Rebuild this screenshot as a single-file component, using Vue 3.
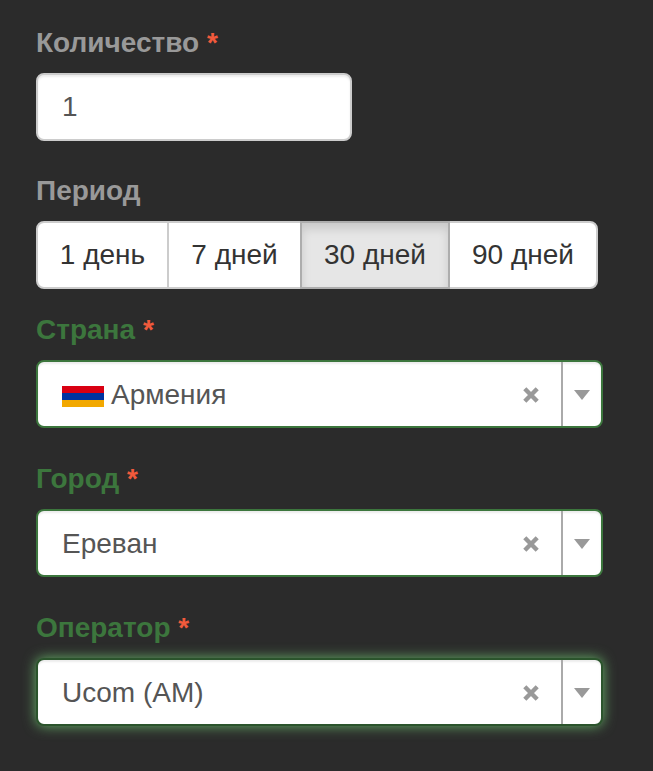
<script setup>
const periods = [
  { text: '1 день', w: 133 },
  { text: '7 дней', w: 135 },
  { text: '30 дней', w: 150 },
  { text: '90 дней', w: 150 }
]
const selects = [
  { label: 'Страна', value: 'Армения', flag: true, cls: '' },
  { label: 'Город', value: 'Ереван', flag: false, cls: '' },
  { label: 'Оператор', value: 'Ucom (AM)', flag: false, cls: 'glow' }
]
</script>

<template>
  <div class="page">
    <div class="group g-qty">
      <label class="label">Количество <span class="req">*</span></label>
      <div class="input">1</div>
    </div>

    <div class="group g-period">
      <label class="label">Период</label>
      <div class="btns">
        <div
          v-for="(p, i) in periods"
          :key="p.text"
          class="btn"
          :class="{ active: i === 2 }"
          :style="{ width: p.w + 'px' }"
        >{{ p.text }}</div>
      </div>
    </div>

    <div v-for="s in selects" :key="s.label" class="group g-sel">
      <label class="label green">{{ s.label }} <span class="req">*</span></label>
      <div class="select" :class="s.cls">
        <div class="value">
          <svg v-if="s.flag" class="flag" viewBox="0 0 42 21" width="42" height="21">
            <rect width="42" height="7" y="0" fill="#d90012" />
            <rect width="42" height="7" y="7" fill="#0033a0" />
            <rect width="42" height="7" y="14" fill="#f2a800" />
          </svg>
          <span>{{ s.value }}</span>
        </div>
        <svg class="clear" viewBox="0 0 16 16" width="16" height="16">
          <path d="M1.8 1.8 L14.2 14.2 M14.2 1.8 L1.8 14.2" stroke="#999" stroke-width="4.4" fill="none" />
        </svg>
        <div class="arrow"><i class="tri"></i></div>
      </div>
    </div>
  </div>
</template>

<style scoped>
.page {
  width: 653px;
  height: 771px;
  box-sizing: border-box;
  background: #2b2b2b;
  padding: 25px 0 0 36px;
  overflow: hidden;
  font-family: "Liberation Sans", Arial, sans-serif;
}
.label {
  display: block;
  height: 36px;
  line-height: 36px;
  margin-bottom: 12px;
  font-size: 28px;
  font-weight: 700;
  color: #999;
}
.label.green { color: #3c763d; }
.req { color: #f15a3c; }
.g-qty { margin-bottom: 32px; }
.g-period { margin-bottom: 23px; }
.g-sel { margin-bottom: 33px; }
.input {
  width: 316px;
  height: 68px;
  box-sizing: border-box;
  background: #fff;
  border: 2px solid #ccc;
  border-radius: 8px;
  box-shadow: inset 0 2px 2px rgba(0, 0, 0, 0.075);
  padding-left: 24px;
  line-height: 64px;
  font-size: 28px;
  color: #555;
}
.btns {
  display: flex;
  width: 562px;
  height: 68px;
}
.btn {
  box-sizing: border-box;
  flex: none;
  height: 68px;
  background: #fff;
  border: 2px solid #ccc;
  margin-left: -2px;
  line-height: 64px;
  text-align: center;
  font-size: 28px;
  color: #333;
}
.btn:first-child {
  margin-left: 0;
  border-radius: 8px 0 0 8px;
}
.btn:last-child { border-radius: 0 8px 8px 0; }
.btn.active {
  background: #e6e6e6;
  border-color: #adadad;
  box-shadow: inset 0 6px 10px rgba(0, 0, 0, 0.125);
  position: relative;
  z-index: 1;
}
.select {
  display: flex;
  align-items: center;
  width: 567px;
  height: 68px;
  box-sizing: border-box;
  background: #fff;
  border: 2px solid #3c763d;
  border-radius: 8px;
  box-shadow: inset 0 2px 2px rgba(0, 0, 0, 0.075);
}
.select.glow {
  border-color: #2b542c;
  box-shadow: inset 0 2px 2px rgba(0, 0, 0, 0.075), 0 0 13px #67b168;
}
.value {
  flex: 1;
  display: flex;
  align-items: center;
  padding: 2px 0 0 24px;
  font-size: 28px;
  color: #555;
}
.flag { margin: 2px 7px 0 0; }
.clear { margin: 2px 22px 0 0; }
.arrow {
  width: 40px;
  height: 64px;
  box-sizing: border-box;
  border-left: 2px solid #aaa;
  padding-top: 2px;
  display: flex;
  align-items: center;
  justify-content: center;
}
.tri {
  width: 0;
  height: 0;
  border-left: 8px solid transparent;
  border-right: 8px solid transparent;
  border-top: 10px solid #999;
}
</style>

<style>
html, body { background: #2b2b2b; }
</style>
